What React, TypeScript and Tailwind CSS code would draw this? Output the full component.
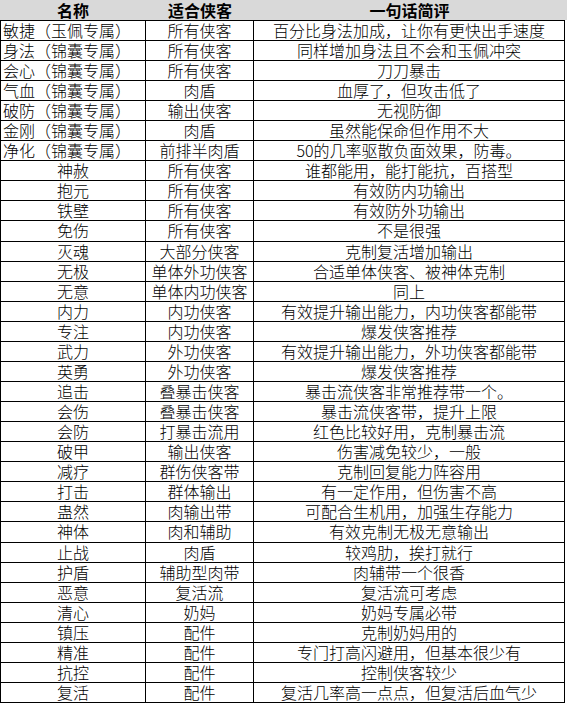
import React from "react";

const rows: [string, string, string][] = [
  ["敏捷（玉佩专属）", "所有侠客", "百分比身法加成，让你有更快出手速度"],
  ["身法（锦囊专属）", "所有侠客", "同样增加身法且不会和玉佩冲突"],
  ["会心（锦囊专属）", "所有侠客", "刀刀暴击"],
  ["气血（锦囊专属）", "肉盾", "血厚了，但攻击低了"],
  ["破防（锦囊专属）", "输出侠客", "无视防御"],
  ["金刚（锦囊专属）", "肉盾", "虽然能保命但作用不大"],
  ["净化（锦囊专属）", "前排半肉盾", "50的几率驱散负面效果，防毒。"],
  ["神赦", "所有侠客", "谁都能用，能打能抗，百搭型"],
  ["抱元", "所有侠客", "有效防内功输出"],
  ["铁壁", "所有侠客", "有效防外功输出"],
  ["免伤", "所有侠客", "不是很强"],
  ["灭魂", "大部分侠客", "克制复活增加输出"],
  ["无极", "单体外功侠客", "合适单体侠客、被神体克制"],
  ["无意", "单体内功侠客", "同上"],
  ["内力", "内功侠客", "有效提升输出能力，内功侠客都能带"],
  ["专注", "内功侠客", "爆发侠客推荐"],
  ["武力", "外功侠客", "有效提升输出能力，外功侠客都能带"],
  ["英勇", "外功侠客", "爆发侠客推荐"],
  ["追击", "叠暴击侠客", "暴击流侠客非常推荐带一个。"],
  ["会伤", "叠暴击侠客", "暴击流侠客带，提升上限"],
  ["会防", "打暴击流用", "红色比较好用，克制暴击流"],
  ["破甲", "输出侠客", "伤害减免较少，一般"],
  ["减疗", "群伤侠客带", "克制回复能力阵容用"],
  ["打击", "群体输出", "有一定作用，但伤害不高"],
  ["蛊然", "肉输出带", "可配合生机用，加强生存能力"],
  ["神体", "肉和辅助", "有效克制无极无意输出"],
  ["止战", "肉盾", "较鸡肋，挨打就行"],
  ["护盾", "辅助型肉带", "肉辅带一个很香"],
  ["恶意", "复活流", "复活流可考虑"],
  ["清心", "奶妈", "奶妈专属必带"],
  ["镇压", "配件", "克制奶妈用的"],
  ["精准", "配件", "专门打高闪避用，但基本很少有"],
  ["抗控", "配件", "控制侠客较少"],
  ["复活", "配件", "复活几率高一点点，但复活后血气少"],
];

export default function App() {
  return (
    <div className="w-[567px] h-[704px] overflow-hidden bg-white text-black font-['Noto_Sans_CJK_SC','Noto_Sans',sans-serif]">
      <div className="flex h-[20px] w-[567px] items-center bg-[#d9d9d9] text-[16px] font-bold leading-[20px]">
        <div className="w-[146px] text-center">名称</div>
        <div className="w-[108px] text-center">适合侠客</div>
        <div className="w-[311px] text-center">一句话简评</div>
      </div>
      <div className="w-[565px] border-t border-l border-r border-black">
        {rows.map((r, i) => (
          <div
            key={i}
            className={`flex items-end border-b border-black text-[16px] font-light leading-[19px] ${i === 10 || i === 25 ? "h-[21px]" : "h-[20px]"}`}
          >
            <div
              className={`w-[145px] h-full shrink-0 border-r border-black whitespace-nowrap ${i < 7 ? "text-left pl-[2px]" : "text-center"}`}
            >
              {r[0]}
            </div>
            <div className="w-[108px] h-full shrink-0 border-r border-black text-center whitespace-nowrap">
              {r[1]}
            </div>
            <div className="w-[310px] h-full shrink-0 text-center whitespace-nowrap">
              {r[2]}
            </div>
          </div>
        ))}
      </div>
    </div>
  );
}
